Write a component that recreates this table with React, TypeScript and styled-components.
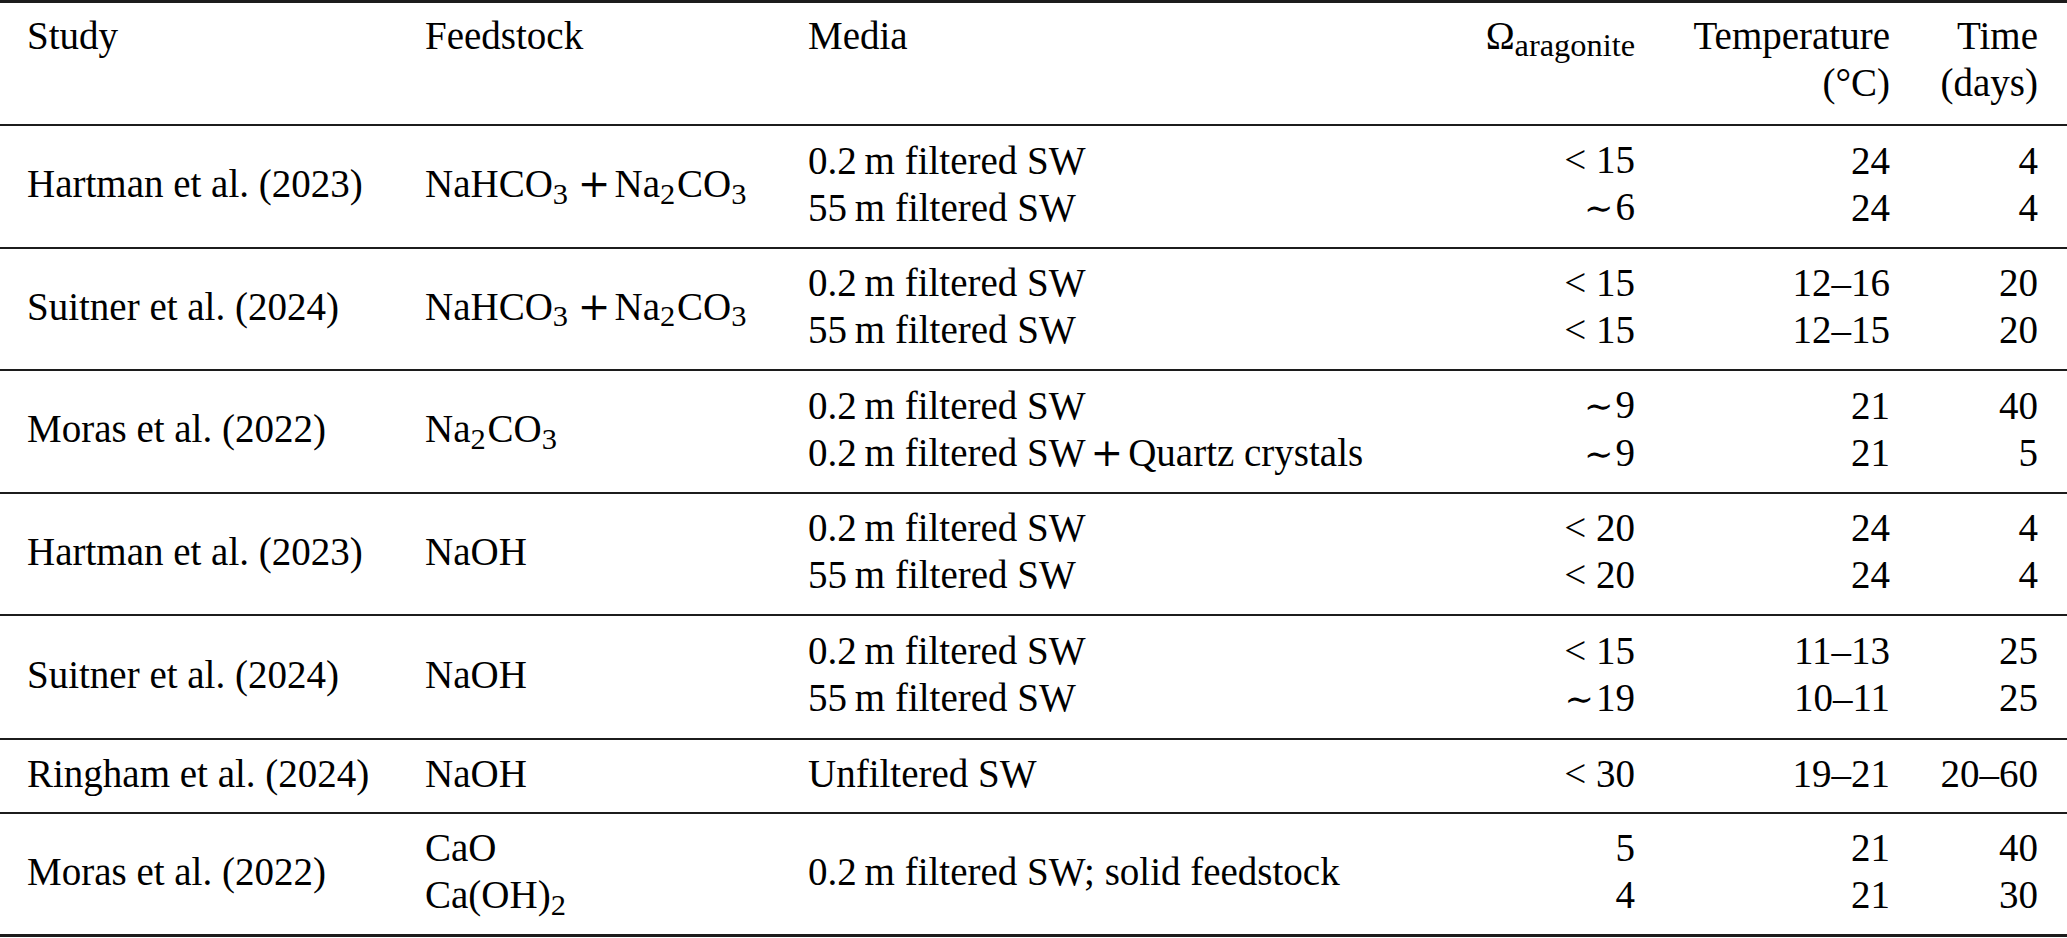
import React from 'react';
import styled, {createGlobalStyle} from 'styled-components';

const Page = createGlobalStyle`
    html, body {
        margin: 0;
        padding: 0;
        background: #fff;
    }
`;

const Table = styled.div`
    width: 2067px;
    border-top: 3px solid #1c1c1c;
`;

const Row = styled.div<{$h: number; $head?: boolean; $last?: boolean}>`
    display: grid;
    grid-template-columns: 398px 383px 519px 362px 255px 148px;
    box-sizing: border-box;
    height: ${p => p.$h}px;
    border-bottom: ${p => (p.$last ? 3 : 2)}px solid #1c1c1c;
    align-items: ${p => (p.$head ? 'start' : 'center')};
    padding: ${p => (p.$head ? '9px 0 0' : '0 0 6px')};
`;

const Cell = styled.div<{$right?: boolean}>`
    font-family: "Liberation Serif", "Times New Roman", Tinos, serif;
    font-size: 39px;
    line-height: 47px;
    color: #000;
    text-align: ${p => (p.$right ? 'right' : 'left')};
    padding: ${p => (p.$right ? '0 27px 0 0' : '0 0 0 27px')};
    white-space: nowrap;
`;

const Line = styled.div`
    display: block;
`;

const Sub = styled.sub`
    font-size: 0.78em;
    line-height: 0;
    vertical-align: -0.22em;
    padding-right: 0.06em;
`;

const OmegaSub = styled.sub`
    font-size: 0.83em;
    line-height: 0;
    vertical-align: -0.21em;
`;

const MathSign = styled.span<{$l?: number; $r?: number; $size?: number}>`
    font-family: "DejaVu Serif", serif;
    font-size: ${p => p.$size ?? 0.9}em;
    margin-left: ${p => p.$l ?? 0}px;
    margin-right: ${p => p.$r ?? 0}px;
`;

const THIN = '\u2009';

const Plus = ({l, r}: {l: number; r: number}) => <MathSign $l={l} $r={r} $size={1}>+</MathSign>;
const Carbonates = () => <>NaHCO<Sub>3</Sub><Plus l={8} r={4} />Na<Sub>2</Sub>CO<Sub>3</Sub></>;
const SodaAsh = () => <>Na<Sub>2</Sub>CO<Sub>3</Sub></>;
const approx = (n: string) => <><MathSign $r={2}>{'\u223c'}</MathSign>{n}</>;

type Entry = {
    study: string;
    feed: React.ReactNode[];
    media: React.ReactNode[];
    omega: React.ReactNode[];
    temp: string[];
    time: string[];
    h: number;
};

const fine = `0.2${THIN}m filtered SW`;
const coarse = `55${THIN}m filtered SW`;
const quartz = <>{fine}<Plus l={5} r={5} />Quartz crystals</>;

const rows: Entry[] = [
    {study: 'Hartman et al. (2023)', feed: [<Carbonates key="c" />], media: [fine, coarse],
        omega: ['< 15', approx('6')], temp: ['24', '24'], time: ['4', '4'], h: 123},
    {study: 'Suitner et al. (2024)', feed: [<Carbonates key="c" />], media: [fine, coarse],
        omega: ['< 15', '< 15'], temp: ['12–16', '12–15'], time: ['20', '20'], h: 122},
    {study: 'Moras et al. (2022)', feed: [<SodaAsh key="s" />], media: [fine, quartz],
        omega: [approx('9'), approx('9')], temp: ['21', '21'], time: ['40', '5'], h: 123},
    {study: 'Hartman et al. (2023)', feed: ['NaOH'], media: [fine, coarse],
        omega: ['< 20', '< 20'], temp: ['24', '24'], time: ['4', '4'], h: 122},
    {study: 'Suitner et al. (2024)', feed: ['NaOH'], media: [fine, coarse],
        omega: ['< 15', approx('19')], temp: ['11–13', '10–11'], time: ['25', '25'], h: 124},
    {study: 'Ringham et al. (2024)', feed: ['NaOH'], media: ['Unfiltered SW'],
        omega: ['< 30'], temp: ['19–21'], time: ['20–60'], h: 74},
    {study: 'Moras et al. (2022)', feed: ['CaO', <React.Fragment key="o">Ca(OH)<Sub>2</Sub></React.Fragment>],
        media: [`${fine}; solid feedstock`], omega: ['5', '4'], temp: ['21', '21'], time: ['40', '30'], h: 123},
];

function Lines({items}: {items: React.ReactNode[]}) {
    return <>{items.map((t, i) => <Line key={i}>{t}</Line>)}</>;
}

export default function App() {
    return <>
        <Page />
        <Table>
            <Row $h={123} $head>
                <Cell>Study</Cell>
                <Cell>Feedstock</Cell>
                <Cell>Media</Cell>
                <Cell $right>Ω<OmegaSub>aragonite</OmegaSub></Cell>
                <Cell $right><Line>Temperature</Line><Line>(°C)</Line></Cell>
                <Cell $right><Line>Time</Line><Line>(days)</Line></Cell>
            </Row>
            {rows.map((r, i) => (
                <Row key={i} $h={r.h} $last={i === rows.length - 1}>
                    <Cell>{r.study}</Cell>
                    <Cell><Lines items={r.feed} /></Cell>
                    <Cell><Lines items={r.media} /></Cell>
                    <Cell $right><Lines items={r.omega} /></Cell>
                    <Cell $right><Lines items={r.temp} /></Cell>
                    <Cell $right><Lines items={r.time} /></Cell>
                </Row>
            ))}
        </Table>
    </>;
}
